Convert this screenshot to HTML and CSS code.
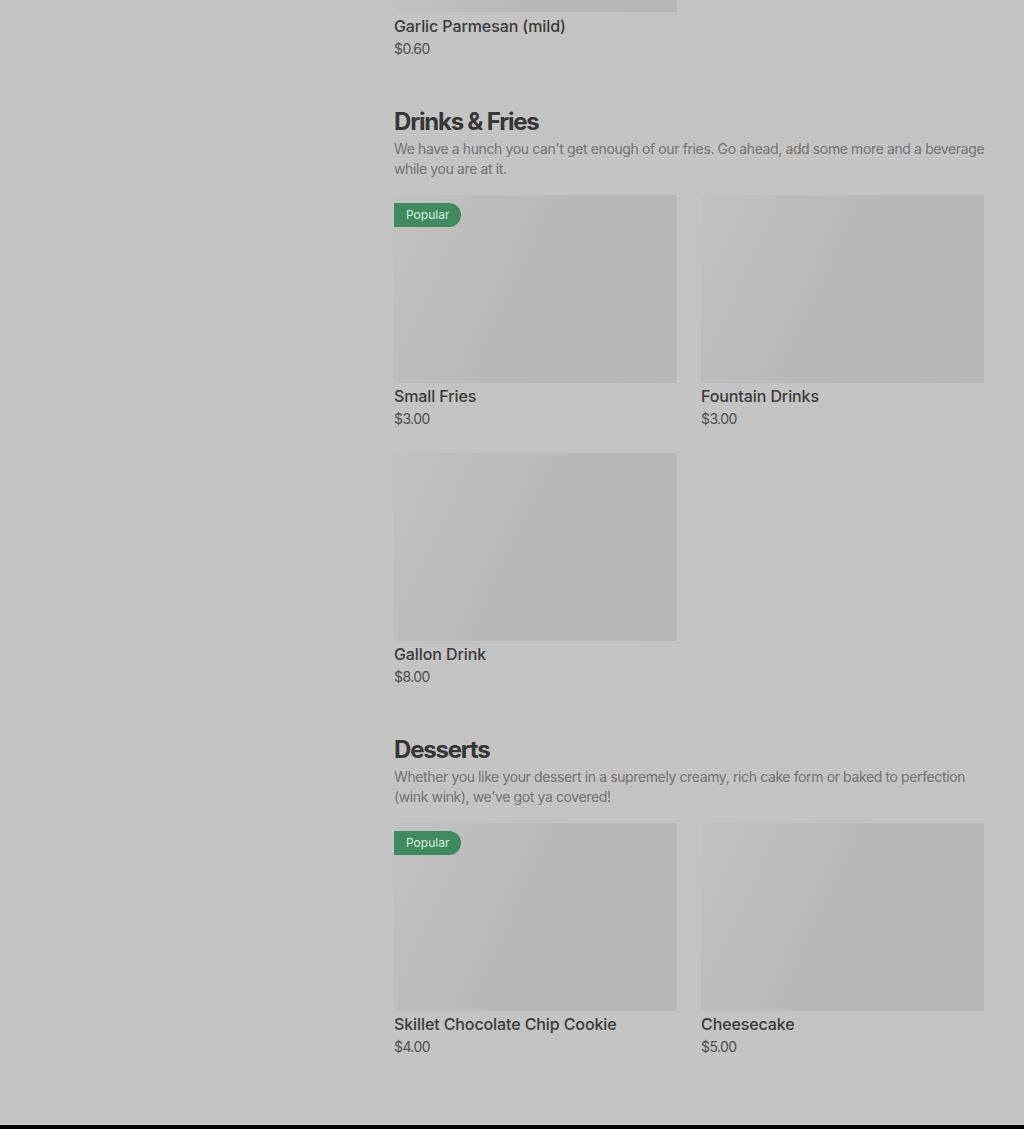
FILE: index.html
```html
<!DOCTYPE html>
<html lang="en">
<head>
<meta charset="utf-8">
<title>Menu</title>
<link rel="stylesheet" href="styles.css">
</head>
<body>
<div class="layout">
  <aside class="sidebar"></aside>
  <main class="menu">
    <section class="section section-partial">
      <ul class="grid">
        <li class="item">
          <div class="thumb thumb-cut"></div>
          <div class="item-title">Garlic Parmesan (mild)</div>
          <div class="item-price">$0.60</div>
        </li>
      </ul>
    </section>

    <section class="section">
      <h2 class="section-title">Drinks &amp; Fries</h2>
      <p class="section-desc">We have a hunch you can't get enough of our fries. Go ahead, add some more and a beverage while you are at it.</p>
      <ul class="grid">
        <li class="item">
          <div class="thumb"><span class="badge">Popular</span></div>
          <div class="item-title">Small Fries</div>
          <div class="item-price">$3.00</div>
        </li>
        <li class="item">
          <div class="thumb"></div>
          <div class="item-title">Fountain Drinks</div>
          <div class="item-price">$3.00</div>
        </li>
        <li class="item">
          <div class="thumb"></div>
          <div class="item-title">Gallon Drink</div>
          <div class="item-price">$8.00</div>
        </li>
      </ul>
    </section>

    <section class="section">
      <h2 class="section-title">Desserts</h2>
      <p class="section-desc">Whether you like your dessert in a supremely creamy, rich cake form or baked to perfection (wink wink), we've got ya covered!</p>
      <ul class="grid">
        <li class="item">
          <div class="thumb"><span class="badge">Popular</span></div>
          <div class="item-title">Skillet Chocolate Chip Cookie</div>
          <div class="item-price">$4.00</div>
        </li>
        <li class="item">
          <div class="thumb"></div>
          <div class="item-title">Cheesecake</div>
          <div class="item-price">$5.00</div>
        </li>
      </ul>
    </section>
  </main>
</div>
<footer class="footer"></footer>
</body>
</html>
```

FILE: styles.css
```css
* { box-sizing: border-box; }

html, body {
  margin: 0;
  padding: 0;
}

body {
  background: #c4c4c4;
  font-family: "Inter", "Liberation Sans", sans-serif;
  color: #363636;
}

.layout {
  display: grid;
  grid-template-columns: 394px 590px;
  padding-bottom: 68px;
}

.menu {
  display: flex;
  flex-direction: column;
  gap: 47px;
}

.section-title {
  margin: 0;
  font-size: 24px;
  line-height: 32px;
  font-weight: 700;
  letter-spacing: -1.2px;
  color: #363636;
}

.section-desc {
  margin: 1px -6px 16px 0;
  font-size: 14px;
  line-height: 20px;
  color: #727272;
  letter-spacing: -0.38px;
}

.grid {
  list-style: none;
  margin: 0;
  padding: 0;
  display: grid;
  grid-template-columns: 283px 283px;
  column-gap: 24px;
  row-gap: 24px;
}

.item {
  display: flex;
  flex-direction: column;
}

.thumb {
  position: relative;
  height: 188px;
  background: linear-gradient(115deg, #c2c2c2 0%, #bdbdbd 25%, #b8b8b8 50%, #b7b7b7 100%);
}

.thumb-cut {
  height: 12px;
  margin-bottom: 1px;
}

.badge {
  position: absolute;
  top: 8px;
  left: 0;
  height: 24px;
  padding: 0 12px;
  line-height: 24px;
  font-size: 12px;
  color: #dcebe1;
  background: #3f8a5f;
  border-radius: 0 12px 12px 0;
}

.item-title {
  margin-top: 1px;
  font-size: 16px;
  line-height: 24px;
  font-weight: 500;
  letter-spacing: -0.1px;
  color: #3a3a3a;
}

.item-price {
  margin-top: 1px;
  font-size: 14px;
  line-height: 20px;
  color: #4e4e4e;
  letter-spacing: -0.6px;
}

.footer {
  background: #000;
  height: 200px;
}
```
